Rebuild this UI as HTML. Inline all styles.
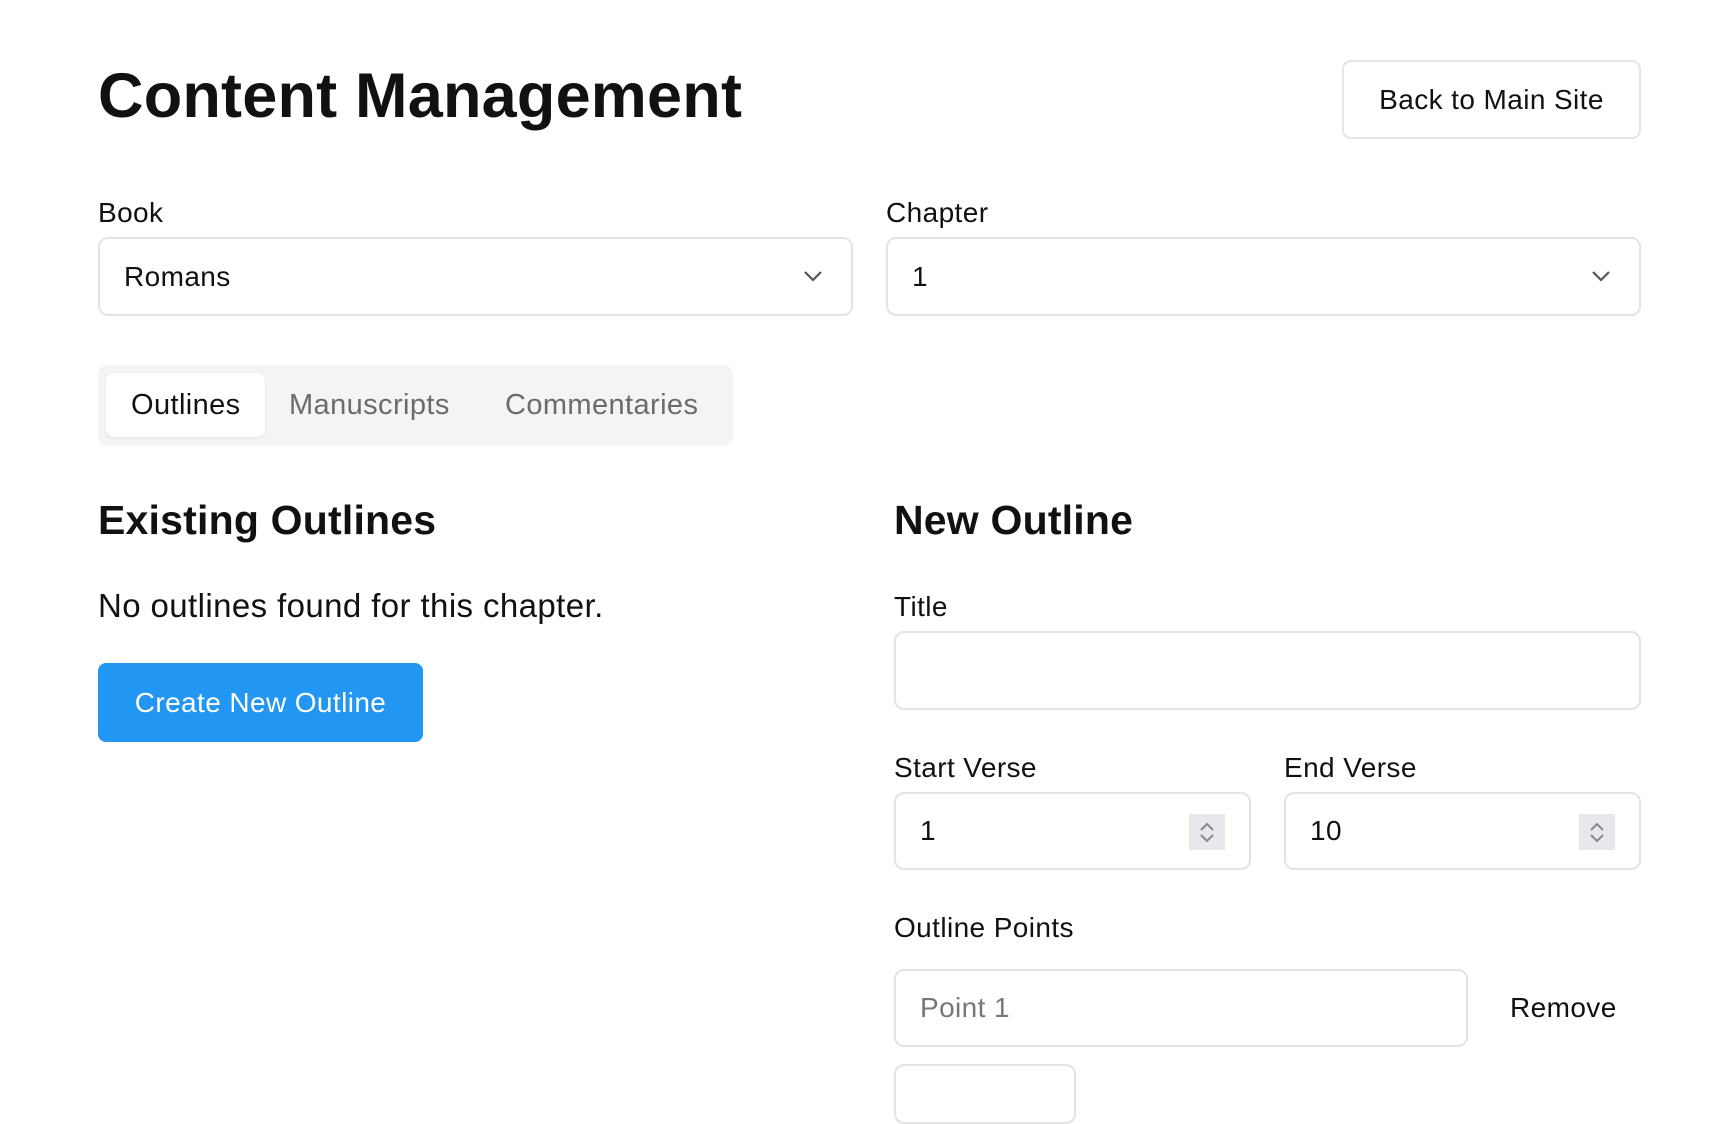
<!DOCTYPE html>
<html><head><meta charset="utf-8"><style>
*{box-sizing:border-box;margin:0;padding:0}
body{width:1726px;height:1084px;overflow:hidden;background:#fff;font-family:"Liberation Sans",sans-serif;color:#111;position:relative;letter-spacing:0.4px}
.a{position:absolute}
h1{position:absolute;left:98px;top:60px;font-size:63px;font-weight:700;letter-spacing:0.2px}
.btn{border:2px solid #e5e5e5;border-radius:9px;background:#fff;display:flex;align-items:center;justify-content:center;font-size:28px}
.lab{font-size:28px;font-weight:500}
.box{border:2px solid #e3e3e3;border-radius:10px;background:#fff;font-size:28px;display:flex;align-items:center;padding-left:24px}
.chev{position:absolute;right:28px;top:50%;margin-top:-7px}
.spin{position:absolute;right:24px;top:20px;width:36px;height:36px;background:#e8e8ec;display:flex;flex-direction:column;align-items:center;justify-content:center;gap:3px}
h2{position:absolute;font-size:41px;font-weight:700;letter-spacing:0.2px}
</style></head><body>
<h1>Content Management</h1>
<div class="a btn" style="left:1342px;top:60px;width:299px;height:79px">Back to Main Site</div>

<div class="a lab" style="left:98px;top:197px">Book</div>
<div class="a lab" style="left:886px;top:197px">Chapter</div>
<div class="a box" style="left:98px;top:237px;width:755px;height:79px">Romans<svg class="chev" width="20" height="12" viewBox="0 0 20 12"><path d="M2 2l8 8 8-8" fill="none" stroke="#555" stroke-width="2.2"/></svg></div>
<div class="a box" style="left:886px;top:237px;width:755px;height:79px">1<svg class="chev" width="20" height="12" viewBox="0 0 20 12"><path d="M2 2l8 8 8-8" fill="none" stroke="#555" stroke-width="2.2"/></svg></div>

<div class="a" style="left:98px;top:365px;width:635px;height:81px;background:#f4f4f4;border-radius:10px"></div>
<div class="a" style="left:106px;top:373px;width:159px;height:64px;background:#fff;border-radius:8px;box-shadow:0 1px 3px rgba(0,0,0,.08)"></div>
<div class="a" style="left:131px;top:389px;font-size:29px">Outlines</div>
<div class="a" style="left:289px;top:389px;font-size:29px;color:#6b6b6b">Manuscripts</div>
<div class="a" style="left:505px;top:389px;font-size:29px;color:#6b6b6b">Commentaries</div>

<h2 style="left:98px;top:497px">Existing Outlines</h2>
<h2 style="left:894px;top:497px">New Outline</h2>
<div class="a" style="left:98px;top:587px;font-size:33px">No outlines found for this chapter.</div>
<div class="a" style="left:98px;top:663px;width:325px;height:79px;background:#2196f3;border-radius:8px;color:#fff;font-size:28px;display:flex;align-items:center;justify-content:center">Create New Outline</div>

<div class="a lab" style="left:894px;top:591px">Title</div>
<div class="a box" style="left:894px;top:631px;width:747px;height:79px"></div>

<div class="a lab" style="left:894px;top:752px">Start Verse</div>
<div class="a lab" style="left:1284px;top:752px">End Verse</div>
<div class="a box" style="left:894px;top:792px;width:357px;height:78px">1<div class="spin"><svg width="16" height="9"><path d="M2 8l6-6 6 6" fill="none" stroke="#888" stroke-width="2"/></svg><svg width="16" height="9"><path d="M2 1l6 6 6-6" fill="none" stroke="#888" stroke-width="2"/></svg></div></div>
<div class="a box" style="left:1284px;top:792px;width:357px;height:78px">10<div class="spin"><svg width="16" height="9"><path d="M2 8l6-6 6 6" fill="none" stroke="#888" stroke-width="2"/></svg><svg width="16" height="9"><path d="M2 1l6 6 6-6" fill="none" stroke="#888" stroke-width="2"/></svg></div></div>

<div class="a lab" style="left:894px;top:912px">Outline Points</div>
<div class="a box" style="left:894px;top:969px;width:574px;height:78px;color:#777">Point 1</div>
<div class="a" style="left:1510px;top:992px;font-size:28px;font-weight:500">Remove</div>
<div class="a" style="left:894px;top:1064px;width:182px;height:60px;border:2px solid #e3e3e3;border-radius:10px"></div>
</body></html>
